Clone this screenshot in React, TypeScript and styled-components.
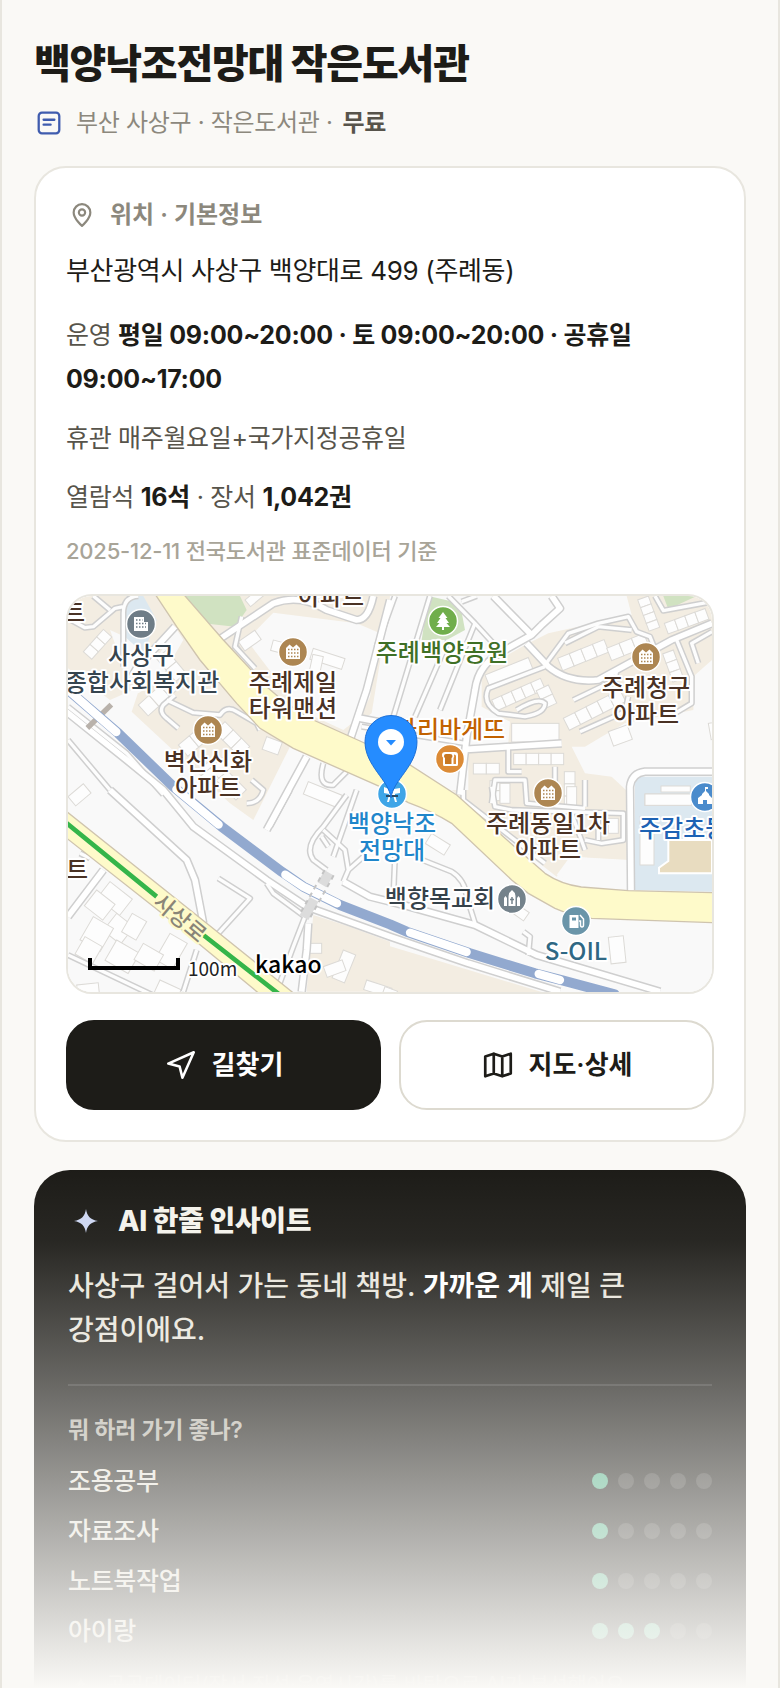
import React from "react";
import styled, { createGlobalStyle } from "styled-components";

const GlobalStyle = createGlobalStyle`
  * { box-sizing: border-box; }
  body {
    margin: 0;
    background: #faf9f6;
    color: #1d1c18;
    font-family: Inter, "Noto Sans CJK KR", sans-serif;
    letter-spacing: -0.02em;
    word-break: keep-all;
  }
  h1, h2, h3, p, ul { margin: 0; padding: 0; }
`;

/* ---------- Layout ---------- */

const Shell = styled.main`
  position: relative;
  height: 100vh;
  overflow: hidden;
  padding: 37px 32px 0;
  border: solid #e8e6df;
  border-width: 0 2px;
`;

const Title = styled.h1`
  font-size: 40px;
  line-height: 54px;
  font-weight: 800;
  letter-spacing: -0.03em;
`;

const Meta = styled.div`
  display: flex;
  align-items: center;
  margin: 15px 0 26px;
  font-size: 24px;
  line-height: 34px;
  color: #8c887d;
  b {
    margin-left: 10px;
    font-weight: 600;
    color: #57544b;
  }
`;

const IconSlot = styled.span<{ $width: number; $gap: number }>`
  flex: none;
  display: flex;
  justify-content: center;
  width: ${(p) => p.$width}px;
  margin-right: ${(p) => p.$gap}px;
`;

const Card = styled.section`
  padding: 30px;
  border: 2px solid #e8e6df;
  border-radius: 32px;
  background: #fff;
`;

const CardHead = styled.h2`
  display: flex;
  align-items: center;
  font-size: 24px;
  line-height: 34px;
  font-weight: 600;
  letter-spacing: 0;
  color: #8c887d;
`;

const Address = styled.p`
  margin: 17px 0 20px;
  font-size: 26px;
  line-height: 44px;
`;

const Fact = styled.p`
  margin-bottom: 15px;
  font-size: 25px;
  line-height: 44px;
  color: #57544b;
  b {
    font-weight: 700;
    letter-spacing: -0.01em;
    color: #1d1c18;
  }
`;

const Source = styled.p`
  font-size: 22px;
  line-height: 34px;
  font-weight: 500;
  letter-spacing: -0.01em;
  color: #a8a498;
`;

const MapFrame = styled.div`
  height: 400px;
  margin: 26px 0;
  border: 2px solid #e8e6df;
  border-radius: 26px;
  overflow: hidden;
  svg {
    display: block;
    width: 100%;
    height: 100%;
  }
`;

const Actions = styled.div`
  display: flex;
  gap: 18px;
`;

const ActionButton = styled.button<{ $primary?: boolean }>`
  flex: 1;
  display: flex;
  align-items: center;
  justify-content: center;
  gap: 14px;
  height: 90px;
  border: 2px solid ${(p) => (p.$primary ? "#1d1c18" : "#dddad0")};
  border-radius: 28px;
  background: ${(p) => (p.$primary ? "#1d1c18" : "#fff")};
  color: ${(p) => (p.$primary ? "#fff" : "#1d1c18")};
  font-family: inherit;
  font-size: 26px;
  line-height: 34px;
  font-weight: 600;
  cursor: pointer;
`;

const Insight = styled.section`
  margin-top: 28px;
  padding: 34px;
  border-radius: 36px;
  background: #1d1c18;
  color: #e8e5dc;
`;

const InsightHead = styled.h2`
  display: flex;
  align-items: center;
  font-size: 28px;
  line-height: 34px;
  font-weight: 800;
  color: #f5f3ec;
`;

const Summary = styled.p`
  margin: 26px 0 32px;
  font-size: 28px;
  line-height: 44px;
  font-weight: 500;
  letter-spacing: 0;
  b {
    font-weight: 600;
    color: #fff;
  }
`;

const Scores = styled.div`
  padding-top: 27px;
  border-top: 2px solid rgba(255, 255, 255, 0.12);
`;

const ScoresTitle = styled.h3`
  margin-bottom: 17px;
  font-size: 23px;
  line-height: 34px;
  font-weight: 600;
  color: #b8b5ab;
`;

const ScoreList = styled.ul`
  display: grid;
  gap: 16px;
  list-style: none;
`;

const ScoreRow = styled.li`
  display: flex;
  align-items: center;
  justify-content: space-between;
  font-size: 25px;
  line-height: 34px;
  font-weight: 500;
`;

const Dots = styled.span`
  display: flex;
  gap: 10px;
`;

const Dot = styled.i<{ $on: boolean }>`
  width: 16px;
  height: 16px;
  border-radius: 50%;
  background: ${(p) => (p.$on ? "#55b48c" : "#3d3c38")};
`;

const Note = styled.p`
  display: flex;
  align-items: center;
  margin-top: 20px;
  font-size: 21px;
  line-height: 34px;
  color: #8c887d;
`;

const Fade = styled.div`
  position: absolute;
  inset: auto 0 0;
  height: 520px;
  pointer-events: none;
  background: linear-gradient(
    rgba(250, 249, 246, 0),
    rgba(250, 249, 246, 0.05) 14%,
    rgba(250, 249, 246, 0.35) 42%,
    #faf9f6
  );
`;

/* ---------- Icons ---------- */

type IconProps = { size: number; width?: number; color?: string; children: React.ReactNode };

const Icon = ({ size, width = 2, color = "currentColor", children }: IconProps) => (
  <svg
    width={size}
    height={size}
    viewBox="0 0 24 24"
    fill="none"
    stroke={color}
    strokeWidth={width}
    strokeLinecap="round"
    strokeLinejoin="round"
    aria-hidden="true"
  >
    {children}
  </svg>
);

const NoteIcon = () => (
  <Icon size={26} color="#3f5cae" width={2.1}>
    <rect x="2.500" y="2.500" width="19" height="19" rx="3" />
    <path d="M7 9h10M7 13.500h6.500" />
  </Icon>
);

const PinIcon = () => (
  <Icon size={26} width={2}>
    <path d="M12 22s-7.700-6.500-7.700-12.300a7.700 7.700 0 0 1 15.400 0C19.700 15.500 12 22 12 22z" />
    <circle cx="12" cy="9.700" r="2.900" />
  </Icon>
);

const NavIcon = () => (
  <Icon size={34} width={1.8}>
    <path d="M3 11 21 3 13 21l-2-8z" />
  </Icon>
);

const MapIcon = () => (
  <Icon size={34} width={1.9}>
    <path d="M9 4 3 6v14l6-2 6 2 6-2V4l-6 2zM9 4v14M15 6v14" />
  </Icon>
);

const SparkIcon = ({ size, color }: { size: number; color: string }) => (
  <svg width={size} height={size} viewBox="0 0 24 24" fill={color} aria-hidden="true">
    <path d="M12 0c1.100 7.200 4.300 10.700 12 12-7.700 1.300-10.900 4.800-12 12-1.100-7.200-4.300-10.700-12-12 7.700-1.300 10.900-4.800 12-12z" />
  </svg>
);

/* ---------- Map ---------- */

type Tile = {
  x: number;
  y: number;
  land: string[];
  clear: string[];
  park: string[];
  water: string[];
  roads: string[];
  lanes: string[];
  blocks: number[][];
};

/* Each block is x, y, width, height, rotation, number of cells in a row. */
const tiles: Tile[] = [
  {
    x: -24,
    y: -18,
    land: [
      "24,18 290,18 530,335 690,470 580,690 510,640 215,365 240,290 150,330 24,235",
      "400,18 990,18 985,60 935,370 895,400 860,440 760,400 600,300 520,220 480,150",
    ],
    clear: [
      "640,68 890,100 960,130 930,320 900,380 850,420 720,360 560,150",
      "150,120 195,140 300,190 345,110 370,150 300,270 235,310 190,230",
    ],
    park: ["375,18 540,18 560,60 525,110 430,100"],
    water: ["200,18 250,18 290,90 250,190 195,140"],
    roads: [
      "M475,150 L640,40 Q720,10 800,60 L890,90 Q925,90 940,18",
      "M345,110 L230,235 L215,260",
      "M990,30 L920,300 L870,450",
      "M900,385 L990,402",
      "M740,500 L620,720",
    ],
    lanes: [
      "M235,18 Q190,20 190,70 L190,230",
      "M24,85 L75,113 L100,110 L165,55 L190,50",
      "M100,18 L150,60",
      "M320,330 L400,368 L480,375 Q500,345 530,365 L590,400 L600,420",
      "M345,315 L310,345 Q295,365 320,385 L355,415",
      "M545,80 L525,170 L585,235",
      "M790,520 Q770,590 820,585 L860,545",
      "M24,350 L200,490 L310,614",
      "M24,450 L150,600",
      "M575,570 L610,600 Q600,640 560,640",
      "M820,800 L890,600",
    ],
    blocks: [
      [70, 185, 90, 34, -48, 3],
      [235, 345, 130, 44, -42, 3],
      [495, 395, 105, 44, 45, 3],
      [355, 465, 130, 44, -40, 3],
      [460, 500, 140, 44, 45, 3],
      [420, 560, 120, 40, -40, 3],
      [320, 180, 90, 40, 50, 2],
      [535, 155, 60, 34, -35, 1],
      [535, 165, 85, 34, 58, 1],
      [640, 150, 80, 32, 15, 1],
      [760, 175, 100, 34, 18, 1],
      [790, 200, 70, 32, 102, 1],
      [620, 440, 50, 40, 20, 1],
      [745, 575, 110, 40, 22, 1],
      [555, 30, 50, 26, -40, 1],
    ],
  },
  {
    x: 951,
    y: -18,
    land: [
      "490,130 740,75 725,18 981,18 981,210 930,255 925,360 720,400 650,440 600,470 560,470 600,550 680,560 740,616 250,616 250,490 370,460 375,395 290,350 290,240 420,165",
    ],
    clear: ["640,480 720,400 850,390 870,470 800,550 720,580 660,550"],
    park: ["130,18 225,40 240,120 185,150 110,150", "835,18 935,18 850,58"],
    water: ["750,560 981,560 981,905 750,900"],
    roads: [
      "M470,105 L440,135 L360,180 Q280,220 270,300 L245,440 L225,614",
      "M325,18 L445,140",
      "M500,18 L525,55 L470,105",
      "M425,160 L490,230 Q550,280 640,270 L860,150 L981,100",
      "M245,478 L530,460",
      "M738,900 L735,590 Q740,550 780,545 L981,545",
    ],
    lanes: [
      "M30,18 L-25,170",
      "M135,18 L25,380",
      "M270,100 L165,360",
      "M190,150 L90,380",
      "M190,18 L270,100 L325,160",
      "M230,35 L275,18",
      "M480,225 L550,130 L640,100 L730,80 L755,125 L795,140 L805,165",
      "M540,160 L640,110 L740,120",
      "M875,150 L920,260 L920,340 L870,370",
      "M480,230 L310,295 Q290,340 340,370 L420,380 Q480,370 480,340 Q460,320 395,360",
      "M370,470 L370,545 L410,545",
      "M320,640 L330,570 L420,570 L425,640 L600,655",
      "M565,330 L690,270 L695,240",
      "M585,425 L720,365 L730,320",
      "M940,220 L920,160 L981,125",
      "M810,18 L835,62 L981,35",
      "M510,530 L510,640",
      "M600,570 L600,650",
      "M-70,410 L240,460",
    ],
    blocks: [
      [300, 255, 140, 40, -22, 1],
      [320, 330, 160, 36, -24, 5],
      [518, 205, 150, 40, -22, 4],
      [665, 175, 120, 40, -22, 3],
      [490, 285, 60, 40, 65, 2],
      [535, 385, 190, 40, -27, 5],
      [380, 400, 142, 56, 0, 1],
      [386, 490, 150, 34, 0, 4],
      [265, 520, 78, 32, 0, 2],
      [345, 572, 60, 30, 90, 2],
      [790, 18, 100, 34, 70, 4],
      [838, 100, 130, 34, -20, 4],
      [865, 180, 90, 34, 70, 3],
      [670, 425, 60, 46, -20, 1],
      [570, 545, 110, 32, 90, 3],
      [828, 588, 88, 18, 0, 1],
      [970, 400, 50, 50, -10, 1],
      [780, 612, 130, 34, 0, 1],
    ],
  },
  {
    x: -24,
    y: 582,
    land: ["760,375 870,410 990,455 990,605 740,605 750,470"],
    clear: [],
    park: [],
    water: [],
    roads: [
      "M0,-250 L200,-90 L310,0 L400,110 L620,270 L740,350 L990,440 L1225,520 L1500,605",
      "M150,0 L380,210 L405,270 L430,400",
      "M130,240 L24,380",
      "M745,400 L740,480 L725,605",
      "M850,275 L930,320 L1030,345 L1245,405 L1430,495 L1800,605",
    ],
    lanes: [
      "M475,265 L570,325 L475,430",
      "M620,280 L640,310 L735,380 L700,470 L650,605",
      "M860,15 L790,110 Q730,170 760,210 L800,240",
      "M790,120 L855,180 L865,240 L850,275",
      "M785,140 L805,170",
      "M865,240 L910,200",
      "M630,110 L690,0",
      "M24,495 L330,640",
      "M410,480 L370,605",
      "M90,205 L60,190",
    ],
    blocks: [
      [150, 275, 85, 62, 38, 1],
      [110, 300, 70, 60, 38, 1],
      [170, 370, 66, 66, 38, 1],
      [100, 380, 70, 80, 30, 1],
      [75, 440, 60, 60, 30, 1],
      [170, 450, 80, 70, 30, 1],
      [260, 395, 64, 50, 120, 1],
      [330, 430, 60, 90, 30, 1],
      [250, 460, 70, 56, 30, 1],
      [300, 570, 70, 40, 25, 1],
      [50, 585, 65, 40, -6, 1],
      [24, 20, 60, 36, -40, 1],
      [735, 460, 50, 30, 0, 1],
      [850, 480, 40, 90, 22, 1],
      [790, 530, 60, 34, -20, 1],
      [920, 570, 80, 30, 18, 1],
    ],
  },
  {
    x: 951,
    y: 582,
    land: [
      "-30,455 120,500 470,606 -30,606",
      "200,0 735,0 735,210 560,200 515,260 400,170",
    ],
    clear: ["555,200 730,212 725,300 600,290 515,255"],
    park: [],
    water: [],
    roads: [],
    lanes: [
      "M320,-10 L330,50 L380,60 L715,70 L715,150 L650,160 L600,150",
      "M235,0 L235,30 L480,220",
      "M30,200 L25,320",
      "M100,205 L200,245 Q240,270 245,320 L270,400",
      "M415,425 L435,440 L430,495",
      "M640,70 L640,150",
      "M560,70 L600,180",
    ],
    blocks: [
      [140, 130, 66, 36, 32, 1],
      [345, -20, 30, 60, 0, 1],
      [640, 85, 60, 45, 0, 2],
      [545, -10, 30, 60, 0, 1],
      [670, 442, 45, 80, -6, 1],
      [400, 345, 40, 30, 35, 1],
      [765, 80, 42, 145, 0, 1],
      [780, 12, 140, 34, 0, 1],
      [0, 590, 40, 40, 20, 1],
    ],
  },
];

const rail =
  "0,282 151,412 316,572 461,692 641,827 706,872 816,927 966,985 1016,1007 1206,1072 1401,1132 1486,1154 1640,1195";
const railGaps = [
  "-20,264 145,408",
  "325,580 452,686",
  "652,836 706,872 807,922",
  "1026,1010 1196,1068",
  "1412,1134 1476,1152",
];

const Tiled = ({ render }: { render: (t: Tile) => React.ReactNode }) => (
  <>
    {tiles.map((t, i) => (
      <g key={i} transform={`translate(${t.x} ${t.y})`}>
        {render(t)}
      </g>
    ))}
  </>
);

const Polys = ({ points, fill }: { points: string[]; fill: string }) => (
  <>
    {points.map((p) => (
      <polygon key={p} points={p} fill={fill} />
    ))}
  </>
);

const Lines = ({ d, stroke, width }: { d: string[]; stroke: string; width: number }) => (
  <path d={d.join(" ")} fill="none" stroke={stroke} strokeWidth={width} strokeLinejoin="round" />
);

const Buildings = ({ blocks }: { blocks: number[][] }) => (
  <>
    {blocks.map(([x, y, w, h, r, n], i) => (
      <g key={i} transform={`translate(${x} ${y}) rotate(${r})`} fill="#fdfdfd" stroke="#dcdad6" strokeWidth="3">
        {Array.from({ length: n }, (_, k) => (
          <rect key={k} x={(w / n) * k} y={0} width={w / n} height={h} />
        ))}
      </g>
    ))}
  </>
);

const MapLabel = styled.text<{ $size?: number; $weight?: number; $halo?: string }>`
  font-family: "Noto Sans CJK KR", sans-serif;
  font-size: ${(p) => p.$size ?? 24}px;
  font-weight: ${(p) => p.$weight ?? 500};
  letter-spacing: 0;
  paint-order: stroke;
  stroke: ${(p) => p.$halo ?? "#fff"};
  stroke-width: 4px;
  stroke-linejoin: round;
`;

const brown = "#4a3224";
const labels: [string, number, number, string, ("start" | "end")?][] = [
  ["트", 17, 25, brown, "end"],
  ["사상구", 73, 68, "#36454f"],
  ["종합사회복지관", 74, 95, "#36454f"],
  ["아파트", 263, 9, brown],
  ["주례제일", 225, 95, brown],
  ["타워맨션", 225, 121, brown],
  ["벽산신화", 140, 174, brown],
  ["아파트", 140, 200, brown],
  ["주례백양공원", 374, 65, "#3f7026"],
  ["주례청구", 578, 100, brown],
  ["아파트", 578, 127, brown],
  ["파리바게뜨", 382, 142, "#c26200"],
  ["주례동일1차", 480, 236, brown],
  ["아파트", 480, 262, brown],
  ["주감초등학교", 571, 241, "#1d62b4", "start"],
  ["백양낙조", 324, 236, "#1f86cb"],
  ["전망대", 324, 263, "#1f86cb"],
  ["백향목교회", 372, 311, "#36424a"],
  ["트", 20, 282, brown, "end"],
  ["S-OIL", 508, 364, "#2f6884"],
];

const Poi = ({ x, y, fill, children }: { x: number; y: number; fill: string; children: React.ReactNode }) => (
  <g transform={`translate(${x} ${y})`}>
    <circle r="14.500" fill={fill} stroke="#fff" strokeWidth="1.500" />
    {children}
  </g>
);

const Apartment = ({ x, y }: { x: number; y: number }) => (
  <Poi x={x} y={y} fill="#ad8652">
    <path d="M-7,7V-4L-3.500,-7.500L0,-4.500L3.500,-7.500L7,-4V7z" fill="#fff" />
    <path d="M-5,-2.500H5.500M-5,1H5.500M-5,4.500H5.500" stroke="#ad8652" strokeWidth="1.500" strokeDasharray="1.500 1.500" />
  </Poi>
);

const PlaceMap = () => (
  <svg viewBox="0 0 644 396" preserveAspectRatio="xMidYMid slice" role="img" aria-label="백양낙조전망대 지도">
    <rect width="644" height="396" fill="#f9f9f9" />
    <g transform="scale(0.33333)">
      <Tiled render={(t) => <Polys points={t.land} fill="#f3ede2" />} />
      <Tiled render={(t) => <Polys points={t.clear} fill="#f9f9f9" />} />
      <Tiled render={(t) => <Polys points={t.park} fill="#d0e2c1" />} />
      <Tiled render={(t) => <Polys points={t.water} fill="#dce8f0" />} />
      <polygon points="1801,732 1932,732 1932,832 1773,832 1773,815 1801,795" fill="#e8dcc0" stroke="#fff" strokeWidth="6" />
      <Tiled render={(t) => <Buildings blocks={t.blocks} />} />
      <Tiled render={(t) => <Lines d={t.lanes} stroke="#cfcfcf" width={19} />} />
      <Tiled render={(t) => <Lines d={t.roads} stroke="#cfcfcf" width={26} />} />
      <Tiled render={(t) => <Lines d={t.lanes} stroke="#fdfdfd" width={10} />} />
      <Tiled render={(t) => <Lines d={t.roads} stroke="#fff" width={17} />} />

      <path d="M58,396 L130,326" stroke="#b9b2ab" strokeWidth="16" />
      <g fill="none" strokeLinecap="round" strokeLinejoin="round">
        <polyline points={rail} stroke="#92a9cf" strokeWidth="30" />
        {railGaps.map((p) => (
          <polyline key={p} points={p} stroke="#fff" strokeWidth="25" />
        ))}
      </g>
      <path d="M783,830 L762,866M738,910 L708,965" stroke="#dcdcdc" strokeWidth="30" />
      <path d="M770,822 L694,957M797,838 L722,973" stroke="#c4c4c4" strokeWidth="6" strokeDasharray="14 12" />

      <path
        d="M346,-6 L466,132 L596,272 Q660,330 736,372 L876,435 L1011,497 L1166,597 L1351,762 L1431,832 Q1480,865 1540,873 L1681,884 L1940,890 V980 L1571,967 Q1500,955 1461,937 L1381,892 L1331,852 L1151,682 Q1090,645 1021,620 L936,572 L676,457 L576,397 L506,322 L396,192 L326,92 L261,-6z"
        fill="#fefaca"
        stroke="#cfc4ae"
        strokeWidth="4"
      />
      <path d="M-6,645 L416,982 L680,1194 H575 L276,947 L-6,725z" fill="#fefaca" stroke="#cfc4ae" strokeWidth="4" />
      <path d="M-6,680 L266,902M406,1017 L640,1200" stroke="#35b54a" strokeWidth="14" />
    </g>

    {labels.map(([text, x, y, fill, anchor], i) => (
      <MapLabel key={i} x={x} y={y} fill={fill} textAnchor={anchor ?? "middle"}>
        {text}
      </MapLabel>
    ))}
    <MapLabel $size={22} $halo="#fefaca" fill="#8a8578" textAnchor="middle" transform="translate(107 328) rotate(40)">
      사상로
    </MapLabel>

    <Poi x={73} y={28} fill="#6f7d87">
      <path d="M-7,7V-7H3V-2H7V7z" fill="#fff" />
      <path d="M-5,-4H1.500M-5,-0.500H5M-5,3H5" stroke="#6f7d87" strokeWidth="1.500" strokeDasharray="1.500 1.500" />
    </Poi>
    <Apartment x={225} y={56} />
    <Apartment x={140} y={134} />
    <Apartment x={578} y={61} />
    <Apartment x={480} y={197} />
    <Poi x={375} y={25} fill="#70ae4b">
      <path d="M0,-9L4.500,-3H2.500L6,2H3.500L7,6H1V9H-1V6H-7L-3.500,2H-6L-2.500,-3H-4.500z" fill="#fff" />
    </Poi>
    <Poi x={382} y={163} fill="#dc8b36">
      <path d="M-8,-4Q-8,-7 -5,-7H5Q8,-7 8,-4V5.500Q8,7 6.500,7H-5.500Q-7,7 -7,5.500V-1.500Q-8,-2 -8,-4z" fill="#fff" />
      <path d="M-6,-3Q-6,-5 -4,-5H0Q2.500,-5 2.500,-3Q2.500,-1.500 1.500,-1V5H-5V-1Q-6,-1.500 -6,-3z" fill="#c77722" />
      <path d="M4,-4.500Q6,-4.500 6,-3V5H3.500V-1Q4.500,-2 4,-4.500z" fill="#dc8b36" />
    </Poi>
    <Poi x={637} y={201} fill="#4a8bcc">
      <path d="M-7,7V1L-3,-2V-3L0,-6V-10H3V-8H1V-6L4,-3V-2L7,1V7H2V3H-2V7z" fill="#fff" />
    </Poi>
    <Poi x={324} y={198} fill="#3fa5e7">
      <path d="M-8,-7L-3,-5V0L-8,-1zM2,-5L8,-6V-1L2,0zM-3,-4H3V1H-3zM-1,1L-3,8H-5L-3,1zM1,1L3,8H5L3,1z" fill="#fff" />
      <path d="M-6,2H6" stroke="#2c4a66" strokeWidth="2" />
    </Poi>
    <Poi x={444} y={303} fill="#74828b">
      <path d="M-8,7V-1L-6.500,-3L-5,-1V7zM-3.500,7V-3Q-3,-7 0,-9Q3,-7 3.500,-3V7zM5,7V-1L6.500,-3L8,-1V7z" fill="#fff" />
      <path d="M0,-2V5M-2,0.500H2" stroke="#74828b" strokeWidth="1.500" />
    </Poi>
    <Poi x={508} y={325} fill="#6a95a9">
      <path d="M-6.500,7V-6H2.500V7z" fill="#fff" />
      <path d="M-4,-3.500H0V-0.500H-4z" fill="#6a95a9" />
      <path d="M4,-6L7.500,-2V4Q7.500,6 6,6Q4.500,6 4.500,4V0H3" fill="none" stroke="#fff" strokeWidth="1.500" />
    </Poi>

    <path
      d="M323,202C321,184 297,170 297,145.500A26,26 0 0 1 349,145.500C349,170 325,184 323,202z"
      fill="#258cff"
      stroke="#1c6fd6"
      strokeWidth="1"
    />
    <circle cx="323" cy="146" r="13" fill="#fff" />
    <path d="M318,144H328L323,149.500z" fill="#258cff" />

    <path d="M22,362V372H110V362" fill="none" stroke="#000" strokeWidth="4" />
    <MapLabel $size={19} $weight={400} x="120" y="380" fill="#222">
      100m
    </MapLabel>
    <MapLabel $size={23} x="187" y="377" fill="#000">
      kakao
    </MapLabel>
  </svg>
);

/* ---------- Page ---------- */

const scores = [
  { label: "조용공부", value: 1 },
  { label: "자료조사", value: 1 },
  { label: "노트북작업", value: 1 },
  { label: "아이랑", value: 3 },
];

export default function App() {
  return (
    <>
      <GlobalStyle />
      <Shell>
        <Title>백양낙조전망대 작은도서관</Title>
        <Meta>
          <IconSlot $width={30} $gap={12}>
            <NoteIcon />
          </IconSlot>
          부산 사상구 · 작은도서관 · <b>무료</b>
        </Meta>

        <Card>
          <CardHead>
            <IconSlot $width={32} $gap={12}>
              <PinIcon />
            </IconSlot>
            위치 · 기본정보
          </CardHead>
          <Address>부산광역시 사상구 백양대로 499 (주례동)</Address>
          <Fact>
            운영 <b>평일 09:00~20:00 · 토 09:00~20:00 · 공휴일 09:00~17:00</b>
          </Fact>
          <Fact>휴관 매주월요일+국가지정공휴일</Fact>
          <Fact>
            열람석 <b>16석</b> · 장서 <b>1,042권</b>
          </Fact>
          <Source>2025-12-11 전국도서관 표준데이터 기준</Source>
          <MapFrame>
            <PlaceMap />
          </MapFrame>
          <Actions>
            <ActionButton type="button" $primary>
              <NavIcon />
              길찾기
            </ActionButton>
            <ActionButton type="button">
              <MapIcon />
              지도·상세
            </ActionButton>
          </Actions>
        </Card>

        <Insight>
          <InsightHead>
            <IconSlot $width={36} $gap={14}>
              <SparkIcon size={24} color="#cdd7f3" />
            </IconSlot>
            AI 한줄 인사이트
          </InsightHead>
          <Summary>
            사상구 걸어서 가는 동네 책방. <b>가까운 게</b> 제일 큰 강점이에요.
          </Summary>
          <Scores>
            <ScoresTitle>뭐 하러 가기 좋나?</ScoresTitle>
            <ScoreList>
              {scores.map((s) => (
                <ScoreRow key={s.label}>
                  {s.label}
                  <Dots role="img" aria-label={`5점 만점에 ${s.value}점`}>
                    {[1, 2, 3, 4, 5].map((n) => (
                      <Dot key={n} $on={n <= s.value} />
                    ))}
                  </Dots>
                </ScoreRow>
              ))}
            </ScoreList>
            <Note>
              <IconSlot $width={26} $gap={12}>
                <SparkIcon size={16} color="#8c887d" />
              </IconSlot>
              공공데이터(장서·좌석·운영시간)를 바탕으로 AI가 분석했어요
            </Note>
          </Scores>
        </Insight>
        <Fade />
      </Shell>
    </>
  );
}
